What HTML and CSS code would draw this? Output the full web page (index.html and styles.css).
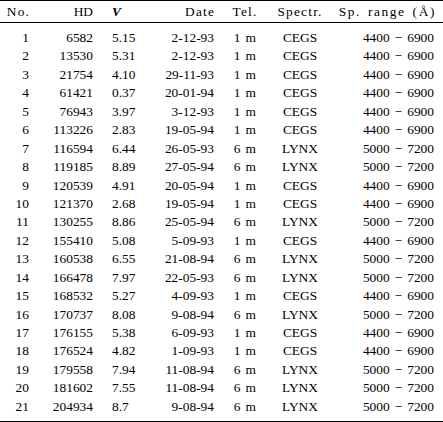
FILE: index.html
```html
<!DOCTYPE html>
<html>
<head>
<meta charset="utf-8">
<link rel="stylesheet" href="styles.css">
</head>
<body>
<div class="table">
  <div class="row head">
    <span class="c1">No.</span><span class="c2">HD</span><span class="c3"><b><i>V</i></b></span><span class="c4">Date</span><span class="c5">Tel.</span><span class="c6">Spectr.</span><span class="c7">Sp. range (Å)</span>
  </div>
  <div class="body">
    <div class="row"><span class="c1">1</span><span class="c2">6582</span><span class="c3">5.15</span><span class="c4">2-12-93</span><span class="c5">1 m</span><span class="c6">CEGS</span><span class="c7">4400<span class="minus">−</span>6900</span></div>
    <div class="row"><span class="c1">2</span><span class="c2">13530</span><span class="c3">5.31</span><span class="c4">2-12-93</span><span class="c5">1 m</span><span class="c6">CEGS</span><span class="c7">4400<span class="minus">−</span>6900</span></div>
    <div class="row"><span class="c1">3</span><span class="c2">21754</span><span class="c3">4.10</span><span class="c4">29-11-93</span><span class="c5">1 m</span><span class="c6">CEGS</span><span class="c7">4400<span class="minus">−</span>6900</span></div>
    <div class="row"><span class="c1">4</span><span class="c2">61421</span><span class="c3">0.37</span><span class="c4">20-01-94</span><span class="c5">1 m</span><span class="c6">CEGS</span><span class="c7">4400<span class="minus">−</span>6900</span></div>
    <div class="row"><span class="c1">5</span><span class="c2">76943</span><span class="c3">3.97</span><span class="c4">3-12-93</span><span class="c5">1 m</span><span class="c6">CEGS</span><span class="c7">4400<span class="minus">−</span>6900</span></div>
    <div class="row"><span class="c1">6</span><span class="c2">113226</span><span class="c3">2.83</span><span class="c4">19-05-94</span><span class="c5">1 m</span><span class="c6">CEGS</span><span class="c7">4400<span class="minus">−</span>6900</span></div>
    <div class="row"><span class="c1">7</span><span class="c2">116594</span><span class="c3">6.44</span><span class="c4">26-05-93</span><span class="c5">6 m</span><span class="c6">LYNX</span><span class="c7">5000<span class="minus">−</span>7200</span></div>
    <div class="row"><span class="c1">8</span><span class="c2">119185</span><span class="c3">8.89</span><span class="c4">27-05-94</span><span class="c5">6 m</span><span class="c6">LYNX</span><span class="c7">5000<span class="minus">−</span>7200</span></div>
    <div class="row"><span class="c1">9</span><span class="c2">120539</span><span class="c3">4.91</span><span class="c4">20-05-94</span><span class="c5">1 m</span><span class="c6">CEGS</span><span class="c7">4400<span class="minus">−</span>6900</span></div>
    <div class="row"><span class="c1">10</span><span class="c2">121370</span><span class="c3">2.68</span><span class="c4">19-05-94</span><span class="c5">1 m</span><span class="c6">CEGS</span><span class="c7">4400<span class="minus">−</span>6900</span></div>
    <div class="row"><span class="c1">11</span><span class="c2">130255</span><span class="c3">8.86</span><span class="c4">25-05-94</span><span class="c5">6 m</span><span class="c6">LYNX</span><span class="c7">5000<span class="minus">−</span>7200</span></div>
    <div class="row"><span class="c1">12</span><span class="c2">155410</span><span class="c3">5.08</span><span class="c4">5-09-93</span><span class="c5">1 m</span><span class="c6">CEGS</span><span class="c7">4400<span class="minus">−</span>6900</span></div>
    <div class="row"><span class="c1">13</span><span class="c2">160538</span><span class="c3">6.55</span><span class="c4">21-08-94</span><span class="c5">6 m</span><span class="c6">LYNX</span><span class="c7">5000<span class="minus">−</span>7200</span></div>
    <div class="row"><span class="c1">14</span><span class="c2">166478</span><span class="c3">7.97</span><span class="c4">22-05-93</span><span class="c5">6 m</span><span class="c6">LYNX</span><span class="c7">5000<span class="minus">−</span>7200</span></div>
    <div class="row"><span class="c1">15</span><span class="c2">168532</span><span class="c3">5.27</span><span class="c4">4-09-93</span><span class="c5">1 m</span><span class="c6">CEGS</span><span class="c7">4400<span class="minus">−</span>6900</span></div>
    <div class="row"><span class="c1">16</span><span class="c2">170737</span><span class="c3">8.08</span><span class="c4">9-08-94</span><span class="c5">6 m</span><span class="c6">LYNX</span><span class="c7">5000<span class="minus">−</span>7200</span></div>
    <div class="row"><span class="c1">17</span><span class="c2">176155</span><span class="c3">5.38</span><span class="c4">6-09-93</span><span class="c5">1 m</span><span class="c6">CEGS</span><span class="c7">4400<span class="minus">−</span>6900</span></div>
    <div class="row"><span class="c1">18</span><span class="c2">176524</span><span class="c3">4.82</span><span class="c4">1-09-93</span><span class="c5">1 m</span><span class="c6">CEGS</span><span class="c7">4400<span class="minus">−</span>6900</span></div>
    <div class="row"><span class="c1">19</span><span class="c2">179558</span><span class="c3">7.94</span><span class="c4">11-08-94</span><span class="c5">6 m</span><span class="c6">LYNX</span><span class="c7">5000<span class="minus">−</span>7200</span></div>
    <div class="row"><span class="c1">20</span><span class="c2">181602</span><span class="c3">7.55</span><span class="c4">11-08-94</span><span class="c5">6 m</span><span class="c6">LYNX</span><span class="c7">5000<span class="minus">−</span>7200</span></div>
    <div class="row"><span class="c1">21</span><span class="c2">204934</span><span class="c3">8.7</span><span class="c4">9-08-94</span><span class="c5">6 m</span><span class="c6">LYNX</span><span class="c7">5000<span class="minus">−</span>7200</span></div>
  </div>
</div>
</body>
</html>
```
FILE: styles.css
```css
html, body {
  margin: 0;
  padding: 0;
  background: #fff;
}
body {
  font-family: "Liberation Serif", "Times New Roman", serif;
  font-size: 13.4px;
  color: #000;
}
.table {
  width: 443px;
  height: 422px;
  box-sizing: border-box;
  border-top: 1px solid #000;
  border-bottom: 1px solid #000;
  display: flex;
  flex-direction: column;
}
.row {
  display: grid;
  grid-template-columns: 29px 64px 53px 68px 62px 48px 110px;
  height: 18.45px;
  line-height: 18.45px;
  white-space: nowrap;
}
.head {
  height: 21px;
  line-height: 21px;
  border-bottom: 1px solid #000;
}
.head span {
  letter-spacing: 1.2px;
  word-spacing: 1px;
}
.head .c1, .head .c4 {
  margin-right: -1.2px;
}
.head .c2 {
  letter-spacing: 0;
}
.head .c7 {
  letter-spacing: 1.6px;
  word-spacing: 2px;
  margin-right: -2px;
}
.body {
  padding-top: 6px;
}
.c1, .c2, .c4, .c7 { text-align: right; }
.c3 { text-align: left; padding-left: 19px; }
.c5, .c6 { text-align: center; }
.c5 {
  word-spacing: 1px;
  letter-spacing: 0.3px;
}
.minus {
  margin: 0 5px;
}
```
